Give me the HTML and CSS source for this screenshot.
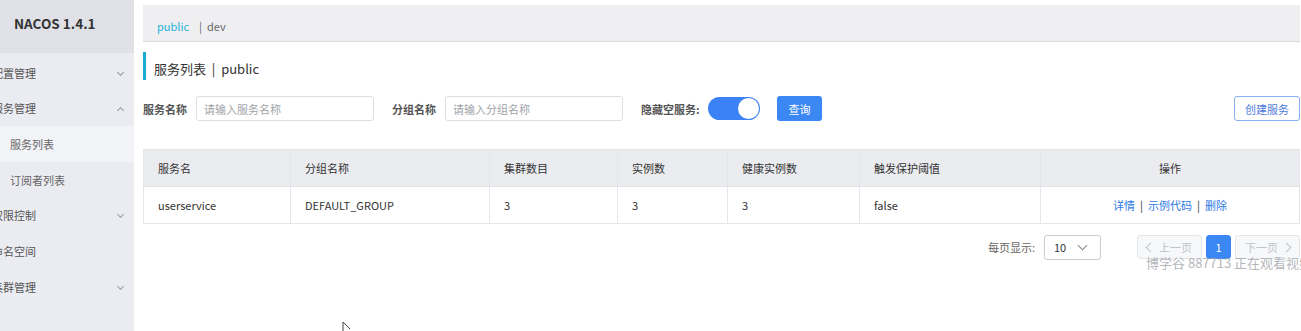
FILE: index.html
```html
<!DOCTYPE html>
<html lang="zh-CN">
<head>
  <meta charset="UTF-8" />
  <title>Nacos</title>
  <link rel="stylesheet" href="styles.css">
</head>
<body>
  <div class="app">
    <aside class="sidebar">
      <div class="brand">NACOS 1.4.1</div>
      <ul class="menu">
        <li class="item">配置管理<span class="chev down"></span></li>
        <li class="item">服务管理<span class="chev up"></span></li>
        <li class="item sub active">服务列表</li>
        <li class="item sub">订阅者列表</li>
        <li class="item">权限控制<span class="chev down"></span></li>
        <li class="item">命名空间</li>
        <li class="item">集群管理<span class="chev down"></span></li>
      </ul>
    </aside>

    <main class="main">
      <div class="ns-bar">
        <span class="ns current">public</span>
        <span class="ns">|&nbsp; dev</span>
      </div>

      <h2 class="title">服务列表 &nbsp;|&nbsp; public</h2>

      <div class="search">
        <label class="label">服务名称</label>
        <input class="field" placeholder="请输入服务名称" />
        <label class="label second">分组名称</label>
        <input class="field" placeholder="请输入分组名称" />
        <label class="label third">隐藏空服务:</label>
        <span class="switch"><span class="knob"></span></span>
        <button class="btn primary">查询</button>
        <button class="btn outline">创建服务</button>
      </div>

      <table class="grid">
        <colgroup>
          <col style="width:147px"><col style="width:199px"><col style="width:128px"><col style="width:110px"><col style="width:132px"><col style="width:181px"><col>
        </colgroup>
        <thead>
          <tr><th>服务名</th><th>分组名称</th><th>集群数目</th><th>实例数</th><th>健康实例数</th><th>触发保护阈值</th><th class="ops">操作</th></tr>
        </thead>
        <tbody>
          <tr>
            <td>userservice</td><td>DEFAULT_GROUP</td><td>3</td><td>3</td><td>3</td><td>false</td>
            <td class="ops"><a>详情</a><span class="sep">|</span><a>示例代码</a><span class="sep">|</span><a>删除</a></td>
          </tr>
        </tbody>
      </table>

      <div class="pager">
        <span class="per">每页显示:</span>
        <span class="select">10<span class="chev down big"></span></span>
        <button class="pg disabled"><span class="arr left"></span>上一页</button>
        <button class="pg cur">1</button>
        <button class="pg disabled">下一页<span class="arr right"></span></button>
      </div>

      <div class="watermark">博学谷 887713 正在观看视频</div>
    </main>
  </div>

  <svg class="cursor" width="10" height="12" viewBox="0 0 10 12"><path d="M1 1 L1 11 M1 1 L8 8" stroke="#444" stroke-width="1" fill="none"/></svg>
</body>
</html>
```

FILE: styles.css
```css
* { box-sizing: border-box; margin: 0; padding: 0; }
body {
  font-family: "Noto Sans CJK SC", "Noto Sans", sans-serif;
  font-size: 11px;
  color: #333;
  background: #fff;
  overflow: hidden;
}
.app { display: flex; height: 331px; }

/* Sidebar */
.sidebar { width: 134px; flex: none; background: #ebecf1; overflow: hidden; }
.brand {
  height: 53px;
  background: #dfe1e7;
  font-size: 13.5px;
  font-weight: bold;
  color: #333;
  padding-left: 14px;
  line-height: 46px;
}
.menu { list-style: none; padding-top: 1.5px; }
.menu .item {
  position: relative;
  height: 35.7px;
  line-height: 37px;
  margin-left: -8px;
  color: #555;
  white-space: nowrap;
}
.menu .item.sub { margin-left: 0; padding-left: 10px; color: #666; }
.menu .item.active { background: #f2f3f7; }
.chev {
  display: inline-block;
  width: 5px;
  height: 5px;
  border-right: 1px solid #999;
  border-bottom: 1px solid #999;
}
.menu .chev { position: absolute; left: 126px; }
.chev.down { transform: rotate(45deg); top: 15px; }
.chev.up { transform: rotate(-135deg); top: 18px; }

/* Main */
.main { flex: 1; position: relative; padding: 5px 1px 0 9px; }
.ns-bar {
  height: 37px;
  background: #efeff1;
  border-bottom: 1px solid #dcdcdf;
  padding-left: 14px;
  display: flex;
  align-items: center;
  gap: 10px;
  padding-top: 6px;
}
.ns { color: #666; }
.ns.current { color: #1eb1d6; }

.title {
  margin-top: 10px;
  height: 28px;
  border-left: 3px solid #1aaad6;
  padding-left: 8px;
  font-size: 13px;
  font-weight: normal;
  line-height: 33px;
  color: #333;
}

.search {
  margin-top: 16px;
  display: flex;
  align-items: center;
  height: 25px;
}
.label { font-weight: bold; color: #555; width: 53px; flex: none; }
.label.second { margin-left: 18px; }
.label.third { margin-left: 18px; width: 67px; }
.field {
  width: 178px;
  height: 25px;
  border: 1px solid #dcdee3;
  border-radius: 3px;
  padding: 0 7px;
  font-family: inherit;
  font-size: 11px;
  color: #333;
}
.field::placeholder { color: #a0a3a8; }
.switch {
  position: relative;
  width: 52px;
  height: 23px;
  border-radius: 12px;
  background: #3b82f6;
  margin-right: 17px;
}
.knob {
  position: absolute;
  right: 1px;
  top: 1px;
  width: 21px;
  height: 21px;
  border-radius: 50%;
  background: #fff;
}
.btn {
  height: 25px;
  border-radius: 3px;
  font-family: inherit;
  font-size: 11px;
  cursor: pointer;
}
.btn.primary { background: #3b88f5; color: #fff; border: none; width: 45px; }
.btn.outline {
  margin-left: auto;
  background: #fff;
  color: #4f7bd9;
  border: 1px solid #89aef2;
  width: 66px;
}

/* Table */
.grid {
  margin-top: 28px;
  width: 100%;
  border-collapse: collapse;
  table-layout: fixed;
  border: 1px solid #e4e6ea;
}
.grid th, .grid td {
  height: 37px;
  text-align: left;
  padding-left: 14px;
  border-right: 1px solid #e4e6ea;
  font-weight: normal;
  color: #333;
}
.grid th { background: #ebecf0; border-bottom: 1px solid #e0e2e6; }
.grid .ops { text-align: center; padding-left: 0; }
.grid a { color: #2f7ae5; }
.grid .sep { margin: 0 5px; color: #333; }

/* Pagination */
.pager {
  margin-top: 11px;
  display: flex;
  align-items: center;
  justify-content: flex-end;
  height: 24px;
}
.per { color: #666; margin-right: 9px; }
.select {
  position: relative;
  width: 57px;
  height: 25px;
  border: 1px solid #c9ccd2;
  border-radius: 3px;
  padding-left: 9px;
  line-height: 23px;
  margin-right: 36px;
}
.select .chev { position: absolute; right: 14px; top: 6px; width: 7px; height: 7px; border-color: #888; }
.pg {
  height: 24px;
  border: 1px solid #e6e7ea;
  border-radius: 3px;
  background: #f7f8fa;
  color: #c0c3c8;
  font-family: inherit;
  font-size: 11px;
  display: flex;
  align-items: center;
  justify-content: center;
  gap: 3px;
}
.pg.disabled { width: 65px; }
.pg.cur { width: 25px; margin: 0 4px; background: #3b88f5; border-color: #3b88f5; color: #fff; }
.arr {
  display: inline-block;
  width: 7px;
  height: 7px;
  border-left: 1px solid #c0c3c8;
  border-bottom: 1px solid #c0c3c8;
}
.arr.left { transform: rotate(45deg); margin-right: 2px; }
.arr.right { transform: rotate(-135deg); margin-left: 2px; }

.watermark {
  position: absolute;
  left: 1012px;
  top: 253px;
  font-size: 13px;
  color: rgba(160, 164, 170, 0.8);
  white-space: nowrap;
}
.cursor { position: absolute; left: 342px; top: 321px; }
```
